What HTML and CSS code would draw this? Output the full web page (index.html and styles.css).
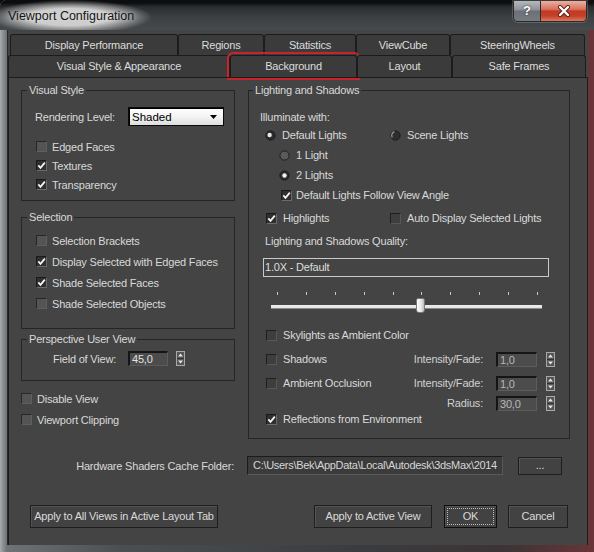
FILE: index.html
```html
<!DOCTYPE html>
<html>
<head>
<meta charset="utf-8">
<title>Viewport Configuration</title>
<link rel="stylesheet" href="styles.css">
</head>
<body>
<div class="window">
  <div class="titlebar">
    <div class="title">Viewport Configuration</div>
    <div class="caption">
      <div class="cap-help">?</div>
      <div class="cap-close">
        <svg width="14" height="12" viewBox="0 0 14 12"><path d="M3 2 L11 10 M11 2 L3 10" stroke="#5a1a10" stroke-width="4" stroke-linecap="round"/><path d="M3 2 L11 10 M11 2 L3 10" stroke="#ffffff" stroke-width="2.4" stroke-linecap="round"/></svg>
      </div>
    </div>
  </div>
  <div class="client">
    <div class="tabrow row1">
      <div class="tab t-dp">Display Performance</div>
      <div class="tab t-reg">Regions</div>
      <div class="tab t-stat">Statistics</div>
      <div class="tab t-vc">ViewCube</div>
      <div class="tab t-sw">SteeringWheels</div>
    </div>
    <div class="tabrow row2">
      <div class="tab t-vs">Visual Style &amp; Appearance</div>
      <div class="tab t-bg selected">Background</div>
      <div class="tab t-lay">Layout</div>
      <div class="tab t-sf">Safe Frames</div>
    </div>
    <div class="panel">
      <div class="columns">
        <div class="col-left">
          <div class="group g-visual">
            <div class="legend">Visual Style</div>
            <div class="render-row">
              <span class="render-label">Rendering Level:</span>
              <div class="dropdown"><span>Shaded</span><svg class="dd-arrow" width="7" height="4" viewBox="0 0 7 4"><path d="M0 0 L7 0 L3.5 4Z" fill="#000"/></svg></div>
            </div>
            <div class="check-row first"><span class="cb"></span>Edged Faces</div>
            <div class="check-row"><span class="cb on"><svg width="9" height="9" viewBox="0 0 9 9"><path d="M1.3 4.4 L3.5 6.8 L7.8 1.6" fill="none" stroke="#f4f4f4" stroke-width="1.8"/></svg></span>Textures</div>
            <div class="check-row"><span class="cb on"><svg width="9" height="9" viewBox="0 0 9 9"><path d="M1.3 4.4 L3.5 6.8 L7.8 1.6" fill="none" stroke="#f4f4f4" stroke-width="1.8"/></svg></span>Transparency</div>
          </div>

          <div class="group g-sel">
            <div class="legend">Selection</div>
            <div class="sel-row first"><span class="cb"></span>Selection Brackets</div>
            <div class="sel-row"><span class="cb on"><svg width="9" height="9" viewBox="0 0 9 9"><path d="M1.3 4.4 L3.5 6.8 L7.8 1.6" fill="none" stroke="#f4f4f4" stroke-width="1.8"/></svg></span>Display Selected with Edged Faces</div>
            <div class="sel-row"><span class="cb on"><svg width="9" height="9" viewBox="0 0 9 9"><path d="M1.3 4.4 L3.5 6.8 L7.8 1.6" fill="none" stroke="#f4f4f4" stroke-width="1.8"/></svg></span>Shade Selected Faces</div>
            <div class="sel-row"><span class="cb"></span>Shade Selected Objects</div>
          </div>

          <div class="group g-persp">
            <div class="legend">Perspective User View</div>
            <div class="fov-row">
              <span class="fov-label">Field of View:</span>
              <div class="num bright">45,0</div>
              <svg class="spin" width="9" height="15" viewBox="0 0 9 15"><rect x="0.5" y="0.5" width="8" height="14" fill="#555" stroke="#a8a8a8"/><path d="M1 7.5 H8" stroke="#333"/><path d="M2 5.5 L4.5 2.5 L7 5.5Z" fill="#e8e8e8"/><path d="M2 9.5 L4.5 12.5 L7 9.5Z" fill="#e8e8e8"/></svg>
            </div>
          </div>

          <div class="plain-row first"><span class="cb"></span>Disable View</div>
          <div class="plain-row"><span class="cb"></span>Viewport Clipping</div>
        </div>

        <div class="col-right">
          <div class="group g-light">
            <div class="legend">Lighting and Shadows</div>
            <div class="illum">Illuminate with:</div>
            <div class="radio-row r-main">
              <span class="ritem">
                <svg class="radio" width="11" height="11" viewBox="0 0 11 11"><circle cx="5.5" cy="5.5" r="4.6" fill="#2c2c2c" stroke="#1a1a1a"/><circle cx="4.6" cy="5" r="2.2" fill="#e6e6e6"/></svg>Default Lights
              </span>
              <span class="ritem">
                <svg class="radio" width="11" height="11" viewBox="0 0 11 11"><circle cx="5.5" cy="5.5" r="4.6" fill="#2e2e2e" stroke="#1a1a1a"/><path d="M2.3 7.5 A4 4 0 0 1 4.5 1.6" fill="none" stroke="#9a9a9a" stroke-width="1.2"/></svg>Scene Lights
              </span>
            </div>
            <div class="radio-row r-sub">
              <svg class="radio" width="11" height="11" viewBox="0 0 11 11"><circle cx="5.5" cy="5.5" r="4.6" fill="#5a5a5a" stroke="#1e1e1e"/></svg>1 Light
            </div>
            <div class="radio-row r-sub">
              <svg class="radio" width="11" height="11" viewBox="0 0 11 11"><circle cx="5.5" cy="5.5" r="4.6" fill="#2c2c2c" stroke="#1a1a1a"/><circle cx="5.5" cy="5.5" r="2.2" fill="#f0f0f0"/></svg>2 Lights
            </div>
            <div class="check-r follow"><span class="cb on"><svg width="9" height="9" viewBox="0 0 9 9"><path d="M1.3 4.4 L3.5 6.8 L7.8 1.6" fill="none" stroke="#f4f4f4" stroke-width="1.8"/></svg></span>Default Lights Follow View Angle</div>
            <div class="check-r highlights">
              <span class="ritem"><span class="cb on"><svg width="9" height="9" viewBox="0 0 9 9"><path d="M1.3 4.4 L3.5 6.8 L7.8 1.6" fill="none" stroke="#f4f4f4" stroke-width="1.8"/></svg></span>Highlights</span>
              <span class="ritem"><span class="cb dim"></span>Auto Display Selected Lights</span>
            </div>
            <div class="quality-label">Lighting and Shadows Quality:</div>
            <div class="quality-field">1.0X - Default</div>
            <div class="slider">
              <div class="ticks">
                <i></i><i></i><i></i><i></i><i></i><i></i><i></i><i></i><i></i><i></i>
              </div>
              <div class="track"><div class="thumb"></div></div>
            </div>
            <div class="check-r sky"><span class="cb dim"></span>Skylights as Ambient Color</div>
            <div class="check-r param shadows">
              <span class="cb dim"></span>Shadows
              <span class="spacer"></span>
              <span class="plabel">Intensity/Fade:</span>
              <div class="num pnum">1,0</div>
              <svg class="spin pspin" width="9" height="15" viewBox="0 0 9 15"><rect x="0.5" y="0.5" width="8" height="14" fill="#555" stroke="#a8a8a8"/><path d="M1 7.5 H8" stroke="#333"/><path d="M2 5.5 L4.5 2.5 L7 5.5Z" fill="#e8e8e8"/><path d="M2 9.5 L4.5 12.5 L7 9.5Z" fill="#e8e8e8"/></svg>
            </div>
            <div class="check-r param ao">
              <span class="cb dim"></span>Ambient Occlusion
              <span class="spacer"></span>
              <span class="plabel">Intensity/Fade:</span>
              <div class="num pnum">1,0</div>
              <svg class="spin pspin" width="9" height="15" viewBox="0 0 9 15"><rect x="0.5" y="0.5" width="8" height="14" fill="#555" stroke="#a8a8a8"/><path d="M1 7.5 H8" stroke="#333"/><path d="M2 5.5 L4.5 2.5 L7 5.5Z" fill="#e8e8e8"/><path d="M2 9.5 L4.5 12.5 L7 9.5Z" fill="#e8e8e8"/></svg>
            </div>
            <div class="check-r param radius">
              <span class="spacer"></span>
              <span class="plabel">Radius:</span>
              <div class="num pnum">30,0</div>
              <svg class="spin pspin" width="9" height="15" viewBox="0 0 9 15"><rect x="0.5" y="0.5" width="8" height="14" fill="#555" stroke="#a8a8a8"/><path d="M1 7.5 H8" stroke="#333"/><path d="M2 5.5 L4.5 2.5 L7 5.5Z" fill="#e8e8e8"/><path d="M2 9.5 L4.5 12.5 L7 9.5Z" fill="#e8e8e8"/></svg>
            </div>
            <div class="check-r refl"><span class="cb on"><svg width="9" height="9" viewBox="0 0 9 9"><path d="M1.3 4.4 L3.5 6.8 L7.8 1.6" fill="none" stroke="#f4f4f4" stroke-width="1.8"/></svg></span>Reflections from Environment</div>
          </div>
        </div>
      </div>

      <div class="hw-row">
        <span class="hw-label">Hardware Shaders Cache Folder:</span>
        <div class="path"><span class="path-text">C:\Users\Bek\AppData\Local\Autodesk\3dsMax\2014</span></div>
        <div class="btn browse">...</div>
      </div>

      <div class="btn-row">
        <div class="btn b-all">Apply to All Views in Active Layout Tab</div>
        <div class="btn b-active">Apply to Active View</div>
        <div class="btn b-ok"><span class="focus">OK</span></div>
        <div class="btn b-cancel">Cancel</div>
      </div>
    </div>
  </div>
</div>
</body>
</html>
```

FILE: styles.css
```css
* { box-sizing: border-box; }

html, body { margin: 0; padding: 0; }

body {
  width: 594px;
  height: 552px;
  background: #0b0b0b;
  font-family: "Liberation Sans", Arial, sans-serif;
  font-size: 11px;
  letter-spacing: -0.2px;
  color: #d9d9d9;
  overflow: hidden;
}

.window {
  width: 594px;
  height: 552px;
  display: flex;
  flex-direction: column;
  border-radius: 6px 6px 0 0;
  overflow: hidden;
  background: linear-gradient(to right, #a9acaf 0, #8d9093 3px, #707376 7px, #4c4f52 120px, #3a3c3f 60%, #3c3436 85%, #6a3438 100%);
}

/* ---------- title bar ---------- */
.titlebar {
  height: 30px;
  flex: none;
  display: flex;
  align-items: flex-start;
  background:
    radial-gradient(ellipse 82px 17px at 70px 17px, rgba(205,205,205,1) 50%, rgba(205,205,205,0) 100%),
    linear-gradient(to bottom, #0c0d0e 0, #0c0d0e 3px, #2b2e31 7px, #3d4144 18px, #464a4d 30px);
}

.title {
  margin: 9px 0 0 8px;
  font-size: 12.5px;
  line-height: 14px;
  letter-spacing: 0;
  color: #151515;
  text-shadow: 0 0 5px rgba(255,255,255,0.6);
}

.caption {
  margin: 1px 7px 0 auto;
  height: 21px;
  display: flex;
  border: 1px solid #2a2a2a;
  border-top: none;
  border-radius: 0 0 5px 5px;
  overflow: hidden;
  box-shadow: 0 0 0 1px rgba(200,200,200,0.25);
}

.cap-help {
  width: 27px;
  background: linear-gradient(to bottom, #b4b9be 0, #8c9197 45%, #6b7076 50%, #767b81 100%);
  border-right: 1px solid #2c2c2c;
  color: #ffffff;
  font-weight: bold;
  font-size: 13px;
  letter-spacing: 0;
  line-height: 20px;
  text-align: center;
  text-shadow: 0 0 2px #222;
}

.cap-close {
  width: 45px;
  display: flex;
  align-items: center;
  justify-content: center;
  background: linear-gradient(to bottom, #eab0a2 0, #d8705c 42%, #c23a22 50%, #c4402a 75%, #de7a5c 100%);
}

/* ---------- client ---------- */
.client {
  flex: 1;
  margin: 0 6px 7px 8px;
  background: #444444;
  display: flex;
  flex-direction: column;
  padding-top: 4px;
  box-shadow: -1px 0 0 #2a2a2a;
}

.tabrow {
  display: flex;
  flex: none;
}

.row1 { height: 21px; padding-left: 2px; }
.row2 { height: 22px; }

.tab {
  height: 100%;
  background: #3b3b3b;
  border: 1px solid #1c1c1c;
  border-bottom: none;
  border-radius: 3px 3px 0 0;
  text-align: center;
  line-height: 20px;
  color: #dcdcdc;
  white-space: nowrap;
}

.t-dp { width: 168px; }
.t-reg { width: 86px; }
.t-stat { width: 92px; }
.t-vc { width: 94px; }
.t-sw { width: 135px; }

.t-vs { width: 222px; }
.t-bg { width: 127px; }
.t-lay { width: 95px; }
.t-sf { width: 134px; }

.tab.selected {
  outline: 2px solid #c8242c;
  outline-offset: 1px;
}

.panel {
  flex: 1;
  border-top: 1px solid #1c1c1c;
  border-left: 1px solid #1c1c1c;
  border-right: 1px solid #1c1c1c;
  padding: 12px 17px 0 12px;
  display: flex;
  flex-direction: column;
}

.columns {
  display: grid;
  grid-template-columns: 214px 322px;
  column-gap: 13px;
  align-items: start;
}

/* ---------- group boxes ---------- */
.group {
  border: 1px solid #252525;
}

.legend {
  margin-top: -8px;
  padding: 0 2px;
  width: max-content;
  background: #444444;
  line-height: 14px;
}

.g-visual .legend { margin-left: -8px; }
.g-sel .legend { margin-left: -9px; }
.g-persp .legend { margin-left: -26px; }
.g-light .legend { margin-left: 4px; }

/* ---------- checkboxes / radios ---------- */
.cb {
  width: 11px;
  height: 11px;
  flex: none;
  margin-right: 5px;
  background: #545454;
  border: 1px solid;
  border-color: #262626 #5f5f5f #5f5f5f #262626;
  display: flex;
}

.cb.on {
  background: #2f2f2f;
  border-color: #1a1a1a #6a6a6a #6a6a6a #1a1a1a;
}

.cb.dim {
  background: #3e3e3e;
  border-color: #1f1f1f #575757 #575757 #1f1f1f;
}

.radio {
  flex: none;
  margin-right: 6px;
}

/* ---------- Visual style ---------- */
.g-visual { padding: 0 0 6px 13px; }

.render-row {
  display: flex;
  align-items: center;
  height: 19px;
  margin-top: 10px;
}

.render-label { width: 93px; }

.dropdown {
  width: 96px;
  height: 19px;
  display: flex;
  align-items: center;
  justify-content: space-between;
  padding: 0 6px 0 3px;
  background: linear-gradient(to bottom, #ffffff 0, #f4f4f4 50%, #dedede 100%);
  border: 1px solid #0a0a0a;
  box-shadow: inset 1px 1px 0 #000;
  color: #000;
  font-size: 11.5px;
  letter-spacing: 0;
}

.check-row {
  display: flex;
  align-items: center;
  height: 19px;
  margin-left: 1px;
}

.check-row.first { margin-top: 11px; }

/* ---------- Selection ---------- */
.g-sel {
  margin-top: 16px;
  padding: 0 0 14px 14px;
}

.sel-row {
  display: flex;
  align-items: center;
  height: 21px;
}

.sel-row.first { margin-top: 6px; }

/* ---------- Perspective ---------- */
.g-persp {
  margin-top: 10px;
  padding: 0 0 14px 31px;
}

.fov-row {
  display: flex;
  align-items: center;
  height: 15px;
  margin-top: 5px;
}

.fov-label { width: 75px; }

.num {
  width: 40px;
  height: 15px;
  background: #4c4c4c;
  border-style: solid;
  border-width: 2px 1px 1px 2px;
  border-color: #151515 #5c5c5c #5c5c5c #151515;
  padding-left: 2px;
  line-height: 12px;
  color: #b8b8b8;
}

.num.bright { color: #e2e2e2; }

.spin {
  flex: none;
  margin-left: 8px;
}

.plain-row {
  display: flex;
  align-items: center;
  height: 21px;
}

.plain-row .cb { margin-right: 5px; }
.plain-row.first { margin-top: 7px; }

/* ---------- Lighting and Shadows ---------- */
.g-light { padding: 0 14px 11px 0; }

.illum {
  margin-top: 12px;
  height: 16px;
  line-height: 16px;
  padding-left: 11px;
}

.radio-row {
  display: flex;
  align-items: center;
  height: 20px;
}

.r-main { padding-left: 16px; }
.r-main .ritem:first-child { width: 125px; }
.r-sub { padding-left: 30px; }

.ritem {
  display: flex;
  align-items: center;
}

.check-r {
  display: flex;
  align-items: center;
  height: 20px;
  padding-left: 17px;
}

.check-r .cb { margin-right: 6px; }

.follow { padding-left: 32px; }
.follow .cb { margin-right: 4px; }

.highlights { margin-top: 3px; }
.highlights .ritem:first-child { width: 124px; }

.quality-label {
  margin-top: 5px;
  height: 16px;
  line-height: 16px;
  padding-left: 16px;
}

.quality-field {
  margin: 9px 0 0 14px;
  width: 286px;
  height: 19px;
  border: 1px solid #cacaca;
  line-height: 17px;
  padding-left: 1px;
  color: #dedede;
}

.slider {
  margin: 15px 0 0 22px;
  width: 271px;
}

.ticks {
  display: flex;
  justify-content: space-between;
  margin-left: 6px;
  width: 261px;
  height: 3px;
}

.ticks i {
  display: block;
  width: 1px;
  height: 3px;
  background: #c8c8c8;
}

.track {
  margin-top: 3px;
  height: 16px;
  display: flex;
  background: linear-gradient(to bottom, transparent 0, transparent 7px, #ececec 7px, #e2e2e2 10px, #8c8c8c 10px, #8c8c8c 11px, transparent 11px);
}

.thumb {
  margin-left: 145px;
  width: 9px;
  height: 15px;
  background: linear-gradient(to right, #ffffff 0, #e6e6e6 60%, #bdbdbd 100%);
  border: 1px solid #7a7a7a;
  border-radius: 2px 2px 3px 3px;
}

.sky { margin-top: 11px; }
.shadows { margin-top: 4px; }
.ao { margin-top: 4px; }
.radius { margin-top: 2px; height: 16px; }
.refl { height: 16px; }

.spacer { flex: 1; }

.plabel { color: #d0d0d0; }

.pnum {
  width: 41px;
  margin-left: 13px;
}

.pspin { margin-left: 9px; }

/* ---------- bottom ---------- */
.hw-row {
  display: flex;
  align-items: center;
  height: 19px;
  margin-top: 17px;
}

.hw-label {
  width: 213px;
  text-align: right;
}

.path {
  margin-left: 13px;
  width: 256px;
  height: 19px;
  background: #3b3b3b;
  border: 1px solid;
  border-color: #1b1b1b #585858 #585858 #1b1b1b;
  padding-left: 5px;
  line-height: 17px;
  white-space: nowrap;
  overflow: hidden;
  color: #d6d6d6;
}

.path-text { letter-spacing: -0.3px; }

.btn {
  height: 23px;
  background: #424242;
  border: 1px solid #1e1e1e;
  box-shadow: inset 1px 1px 0 #545454;
  text-align: center;
  line-height: 21px;
  color: #dadada;
  white-space: nowrap;
}

.browse {
  margin-left: 15px;
  width: 44px;
  height: 18px;
  line-height: 14px;
}

.btn-row {
  display: flex;
  margin-top: 30px;
  height: 23px;
}

.b-all { margin-left: 9px; width: 188px; }
.b-active { margin-left: auto; width: 118px; }
.b-ok {
  margin-left: 12px;
  width: 53px;
  padding: 2px;
  border-color: #0e0e0e;
}
.b-ok .focus {
  display: block;
  height: 100%;
  border: 1px dotted #bdbdbd;
  line-height: 15px;
}
.b-cancel { margin-left: 11px; margin-right: 2px; width: 60px; }
```
